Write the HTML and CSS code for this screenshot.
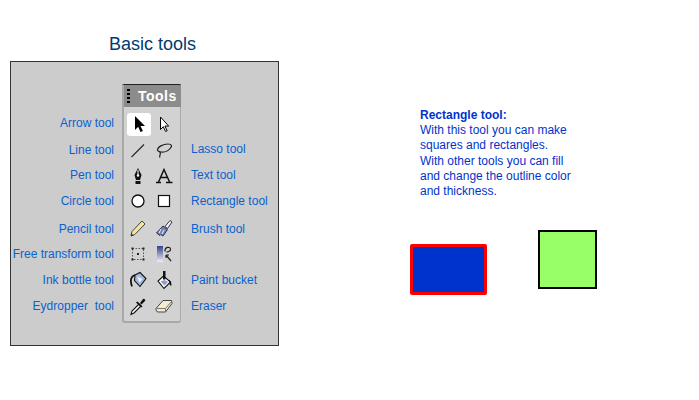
FILE: index.html
```html
<!DOCTYPE html>
<html>
    <head>
        <title>Basic tools</title>
        <link rel="stylesheet" href="styles.css">
    </head>
    <body>
      <div class="page">
        <section class="left-side">
          <h1 class="heading">Basic tools</h1>
          <div class="panel">
            <div class="labels labels-left">
              <span>Arrow tool</span>
              <span>Line tool</span>
              <span>Pen tool</span>
              <span>Circle tool</span>
              <span>Pencil tool</span>
              <span>Free transform tool</span>
              <span>Ink bottle tool</span>
              <span>Eydropper&nbsp; tool</span>
            </div>
            <div class="palette">
              <div class="palette-title">
                <div class="grip"><i></i><i></i><i></i><i></i></div>
                <strong>Tools</strong>
              </div>
              <div class="tool-grid">
                <div class="tool selected">
                  <svg width="20" height="20" viewBox="0 0 20 20"><path d="M6 2v14l3.200-3.200 2.300 5.200 2.400-1-2.400-5h4.500z" fill="#000"/></svg>
                </div>
                <div class="tool">
                  <svg width="20" height="20" viewBox="0 0 20 20"><path d="M6.500 3v12.500l2.800-2.800 2.300 4.800 1.600-.8-2.300-4.600h3.800z" fill="#fff" stroke="#000"/></svg>
                </div>
                <div class="tool">
                  <svg width="20" height="20" viewBox="0 0 20 20"><path d="M3.500 17L16 4.500" stroke="#222" stroke-width="1.100" fill="none"/></svg>
                </div>
                <div class="tool">
                  <svg width="20" height="20" viewBox="0 0 20 20"><path d="M3.500 10C3.500 7 9 4 14 4c3.500 0 4.500 2 2.500 4-2 2.500-6 4.500-9.500 4-2.500-.5-3.500-1-3.500-2zM5.500 12c1.500 1 1 2 .5 3-.5 1 0 2-.5 2.500" fill="none" stroke="#222" stroke-width="1.200"/></svg>
                </div>
                <div class="tool">
                  <svg width="20" height="20" viewBox="0 0 20 20"><path d="M10 2l3.500 7-1.500 5H8L6.500 9z" fill="#111"/><path d="M10 4v5" stroke="#fff"/><circle cx="10" cy="9.500" r="1.200" fill="#fff"/><rect x="7.500" y="15" width="5" height="3" fill="#111"/></svg>
                </div>
                <div class="tool">
                  <svg width="20" height="20" viewBox="0 0 20 20"><path d="M2 16.500h5M12 16.500h6.500M4.300 16.500L10 3.500l5.800 13M6.500 11.500h7" fill="none" stroke="#111" stroke-width="1.500"/></svg>
                </div>
                <div class="tool">
                  <svg width="20" height="20" viewBox="0 0 20 20"><circle cx="10" cy="10" r="6" fill="#fff" stroke="#111" stroke-width="1.300"/></svg>
                </div>
                <div class="tool">
                  <svg width="20" height="20" viewBox="0 0 20 20"><rect x="4.500" y="4.500" width="11" height="11" fill="#fff" stroke="#111" stroke-width="1.200"/></svg>
                </div>
                <div class="tool">
                  <svg width="20" height="20" viewBox="0 0 20 20"><path d="M3 18l1-4.500L14 3l3 3L6.800 16.500z" fill="#f2e6a0" stroke="#444" stroke-width="1"/><path d="M3 18l.6-2.500 1.900 1.900z" fill="#222"/></svg>
                </div>
                <div class="tool">
                  <svg width="20" height="20" viewBox="0 0 20 20"><path d="M11 8.500L16 2.500l2 1.500-4.500 6.500z" fill="#eef0fa" stroke="#223" stroke-width=".9"/><path d="M2.500 15l6.500-7 4.500 3.500-4.500 6.500-2-1.500-1 1z" fill="#7186bc" stroke="#223" stroke-width=".9"/><path d="M7 11l-2 4M10 12l-2 4" stroke="#eef0fa"/></svg>
                </div>
                <div class="tool">
                  <svg width="20" height="20" viewBox="0 0 20 20"><rect x="4.500" y="4.500" width="11" height="11" fill="none" stroke="#333" stroke-width=".8" stroke-dasharray="1.500 1.500"/><path d="M3.500 3.500h2v2h-2zM14.500 3.500h2v2h-2zM3.500 14.500h2v2h-2zM14.500 14.500h2v2h-2zM9 9h2v2H9z" fill="#222"/></svg>
                </div>
                <div class="tool">
                  <svg width="20" height="20" viewBox="0 0 20 20"><defs><linearGradient id="fade" x1="0" y1="0" x2="0" y2="1"><stop offset="0" stop-color="#34408c"/><stop offset="1" stop-color="#eef0f8"/></linearGradient></defs><rect x="3" y="2" width="6" height="16" fill="url(#fade)"/><path d="M11 7.500C10.500 3 16 2 16.500 5c.3 2-2 3-4 2.800M12 11l5 6M12 11v3M12 11h3" fill="none" stroke="#222" stroke-width="1.200"/></svg>
                </div>
                <div class="tool">
                  <svg width="20" height="20" viewBox="0 0 20 20"><path d="M7 5L12 2.500l6 6-6 8-5.500-6z" fill="#a4b8e0" stroke="#111" stroke-width="1.100"/><path d="M7 5C3 6.500 2 11 4 16.500" fill="none" stroke="#111" stroke-width="1.700"/><path d="M9 6.500l5.500 2.500-3 3.500z" fill="#eef3fc"/></svg>
                </div>
                <div class="tool">
                  <svg width="20" height="20" viewBox="0 0 20 20"><path d="M9.500 6L4 11l6 7.500 6.500-6.500z" fill="#fff" stroke="#111" stroke-width="1.100"/><path d="M9 1h2.500v8.500H9z" fill="#111"/><path d="M14.500 9.500c2 1 3 3 3 6h-1.500z" fill="#111"/><path d="M6.500 11.500l4-1.500 3.500 2-3.500 3.500z" fill="#8fa0c8"/></svg>
                </div>
                <div class="tool">
                  <svg width="20" height="20" viewBox="0 0 20 20"><path d="M3 18.500l1-3.500 7-7 2 2-7 7z" fill="#fff" stroke="#111" stroke-width="1.100"/><path d="M9.500 5.500l5 5-1.500 1-5-5z" fill="#111"/><path d="M12 7l3-4c1-1 3 1 2 2l-3.500 3.500z" fill="#111"/></svg>
                </div>
                <div class="tool">
                  <svg width="20" height="20" viewBox="0 0 20 20"><path d="M2 12.500L9 4.500h8.500l.5 3-6.500 8.500h-8L2 14z" fill="#f4ead0" stroke="#444" stroke-width="1" stroke-linejoin="round"/><path d="M2.500 12.500h9l6-7" fill="none" stroke="#777"/><path d="M11.500 12.500v3.500" stroke="#777"/></svg>
                </div>
              </div>
            </div>
            <div class="labels labels-right">
              <span></span>
              <span>Lasso tool</span>
              <span>Text tool</span>
              <span>Rectangle tool</span>
              <span>Brush tool</span>
              <span></span>
              <span>Paint bucket</span>
              <span>Eraser</span>
            </div>
          </div>
        </section>
        <section class="right-side">
          <div class="note">
            <b>Rectangle tool:</b><br>
            With this tool you can make<br>
            squares and rectangles.<br>
            With other tools you can fill<br>
            and change the outline color<br>
            and thickness.
          </div>
          <div class="shapes">
            <div class="shape-rect"></div>
            <div class="shape-square"></div>
          </div>
        </section>
      </div>
    </body>
</html>
```

FILE: styles.css
```css
body {
  margin: 0;
  background-color: #ffffff;
  font-family: "Liberation Sans", Arial, sans-serif;
}

.page {
  display: flex;
  width: 699px;
  height: 400px;
  overflow: hidden;
}

.left-side {
  width: 269px;
  margin-left: 10px;
  padding-top: 34px;
}

.heading {
  margin: 0 0 6px 0;
  height: 21px;
  font-size: 18px;
  line-height: 21px;
  font-weight: normal;
  color: #003a70;
  text-align: center;
  padding-left: 16px;
}

.panel {
  display: flex;
  width: 269px;
  height: 285px;
  box-sizing: border-box;
  padding-top: 22px;
  background-color: #cccccc;
  border: 1px solid #333333;
}

.labels {
  display: grid;
  grid-template-rows: 27px 25px 26px 28px 25px 26px 26px 25px;
  padding-top: 27px;
  font-size: 12px;
  color: #0a62cc;
  white-space: nowrap;
}

.labels span {
  line-height: 25px;
}

.labels-left {
  width: 103px;
  margin-right: 8px;
  text-align: right;
}

.labels-right {
  grid-template-rows: 26px 26px 26px 28px 25px 26px 26px 25px;
  margin-left: 10px;
}

.palette {
  width: 59px;
  height: 239px;
  box-sizing: border-box;
  background-color: #d2d2d2;
  border-top: 1px solid #222222;
  border-left: 2px solid #a8a8a8;
  border-right: 1px solid #aaaaaa;
  border-bottom: 2px solid #a8a8a8;
  border-radius: 0 0 3px 3px;
}

.palette-title {
  display: flex;
  align-items: center;
  height: 22px;
  margin-right: -1px;
  background-color: #8c8c8c;
  color: #ffffff;
}

.palette-title strong {
  font-size: 14px;
  letter-spacing: 0.5px;
}

.grip {
  display: grid;
  gap: 2px;
  width: 14px;
  padding-left: 3px;
  box-sizing: border-box;
}

.grip i {
  display: block;
  width: 3px;
  height: 2px;
  background-color: #000000;
}

.tool-grid {
  display: grid;
  grid-template-columns: 26px 26px;
  grid-template-rows: 26px 26px 25px 26px 27px 26px 26px 26px;
  padding: 4px 0 0 1px;
}

.tool {
  display: flex;
  align-items: center;
  justify-content: center;
}

.selected {
  align-self: center;
  height: 23px;
  width: 24px;
  margin-left: 2px;
  background-color: #ffffff;
  border-radius: 3px;
}

.right-side {
  margin-left: 131px;
  padding-top: 108px;
}

.note {
  margin-left: 10px;
  width: 180px;
  height: 115px;
  font-size: 12px;
  line-height: 15.2px;
  color: #0033cc;
}

.shapes {
  display: flex;
  align-items: flex-start;
  gap: 51px;
  margin-top: 7px;
}

.shape-rect {
  width: 77px;
  height: 51px;
  margin-top: 14px;
  box-sizing: border-box;
  background-color: #0033cc;
  border: 3px solid #ff0000;
  border-radius: 2px;
}

.shape-square {
  width: 59px;
  height: 59px;
  box-sizing: border-box;
  background-color: #99ff66;
  border: 2px solid #000000;
}
```
